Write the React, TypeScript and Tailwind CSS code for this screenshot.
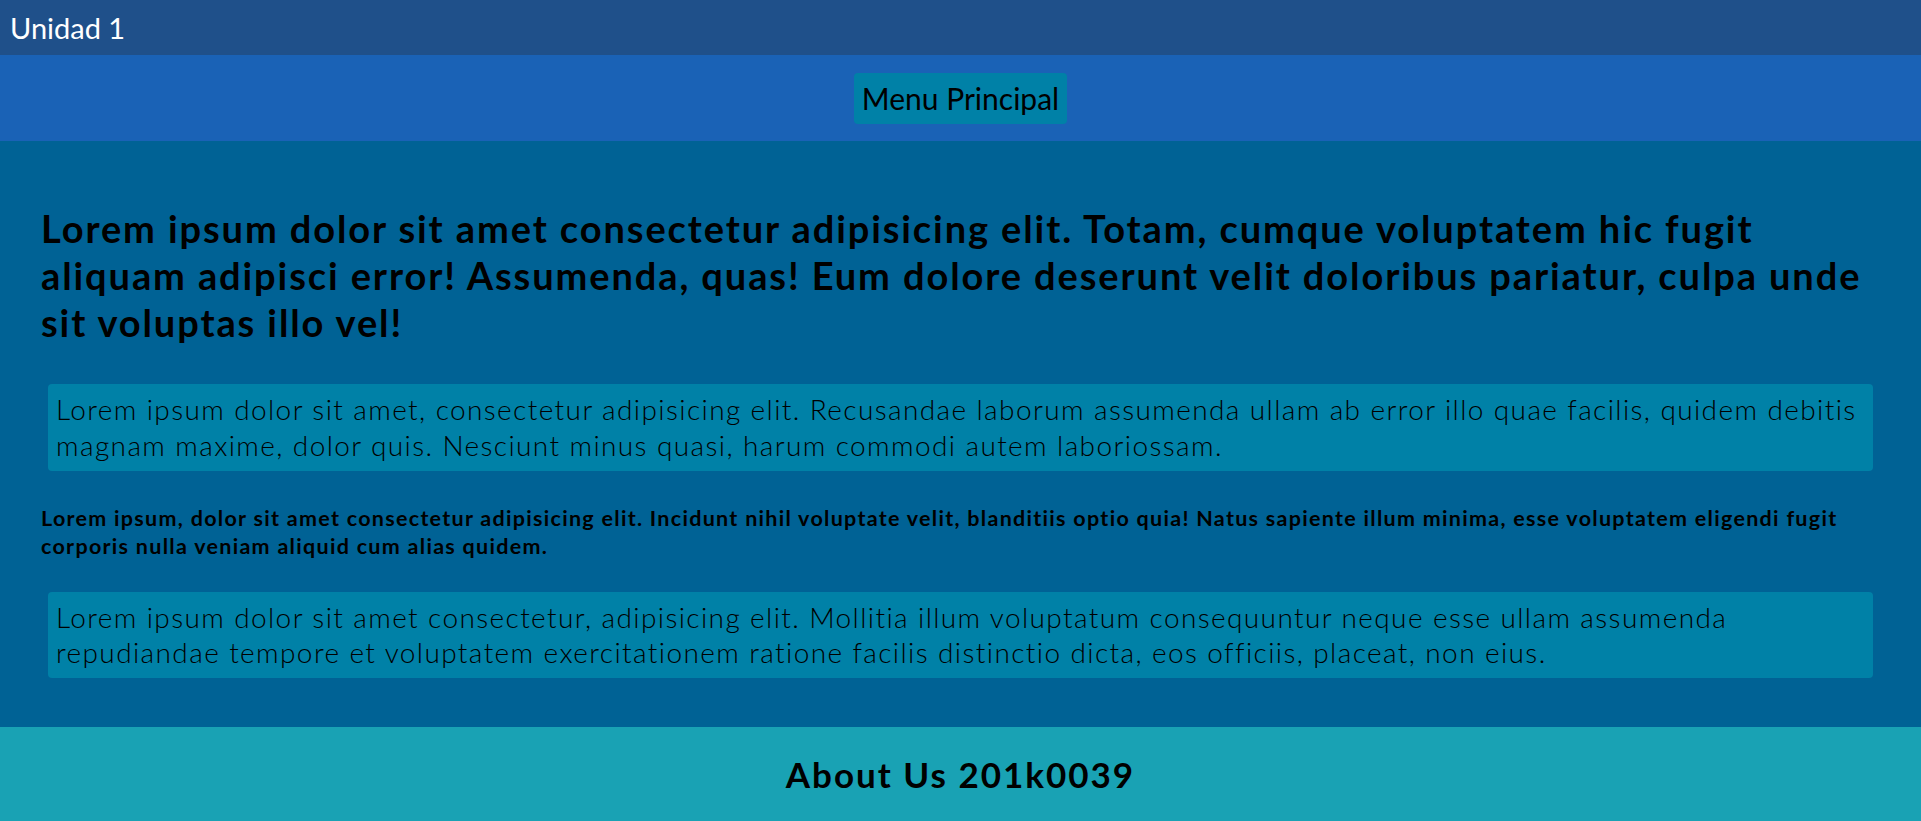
export default function App() {
  return (
    <div className="min-h-screen w-full font-['Lato',sans-serif] text-black">
      <header className="flex h-[55px] items-center bg-[#1f508a] px-[10px]">
        <span className="text-[29px] leading-none text-white">Unidad 1</span>
      </header>
      <nav className="flex h-[86px] items-center justify-center bg-[#1a62b6]">
        <button className="flex h-[51px] items-center rounded-[4px] bg-[#0081a7] px-[8px] text-[30px] leading-none text-black">
          Menu Principal
        </button>
      </nav>
      <main className="bg-[#006295] px-[41px] pt-[64px] pb-[49px]">
        <h1 className="text-[38px] font-bold leading-[47px] tracking-[0.05em]">
          Lorem ipsum dolor sit amet consectetur adipisicing elit. Totam, cumque voluptatem hic fugit aliquam adipisci
          error! Assumenda, quas! Eum dolore deserunt velit doloribus pariatur, culpa unde sit voluptas illo vel!
        </h1>
        <p className="mx-[7px] mt-[38px] rounded-[4px] bg-[#0081a7] px-[8px] py-[8px] text-[28px] font-light leading-[35.5px] tracking-[0.05em]">
          Lorem ipsum dolor sit amet, consectetur adipisicing elit. Recusandae laborum assumenda ullam ab error illo quae
          facilis, quidem debitis magnam maxime, dolor quis. Nesciunt minus quasi, harum commodi autem laboriossam.
        </p>
        <p className="mt-[33px] text-[21.5px] font-bold leading-[28px] tracking-[0.06em]">
          Lorem ipsum, dolor sit amet consectetur adipisicing elit. Incidunt nihil voluptate velit, blanditiis optio quia!
          Natus sapiente illum minima, esse voluptatem eligendi fugit corporis nulla veniam aliquid cum alias quidem.
        </p>
        <p className="mx-[7px] mt-[32px] rounded-[4px] bg-[#0081a7] px-[8px] py-[8px] text-[28px] font-light leading-[35px] tracking-[0.05em]">
          Lorem ipsum dolor sit amet consectetur, adipisicing elit. Mollitia illum voluptatum consequuntur neque esse
          ullam assumenda repudiandae tempore et voluptatem exercitationem ratione facilis distinctio dicta, eos officiis,
          placeat, non eius.
        </p>
      </main>
      <footer className="flex h-[95px] items-center justify-center bg-[#19a2b4]">
        <span className="text-[35px] font-bold leading-none tracking-[0.057em]">About Us 201k0039</span>
      </footer>
    </div>
  );
}
